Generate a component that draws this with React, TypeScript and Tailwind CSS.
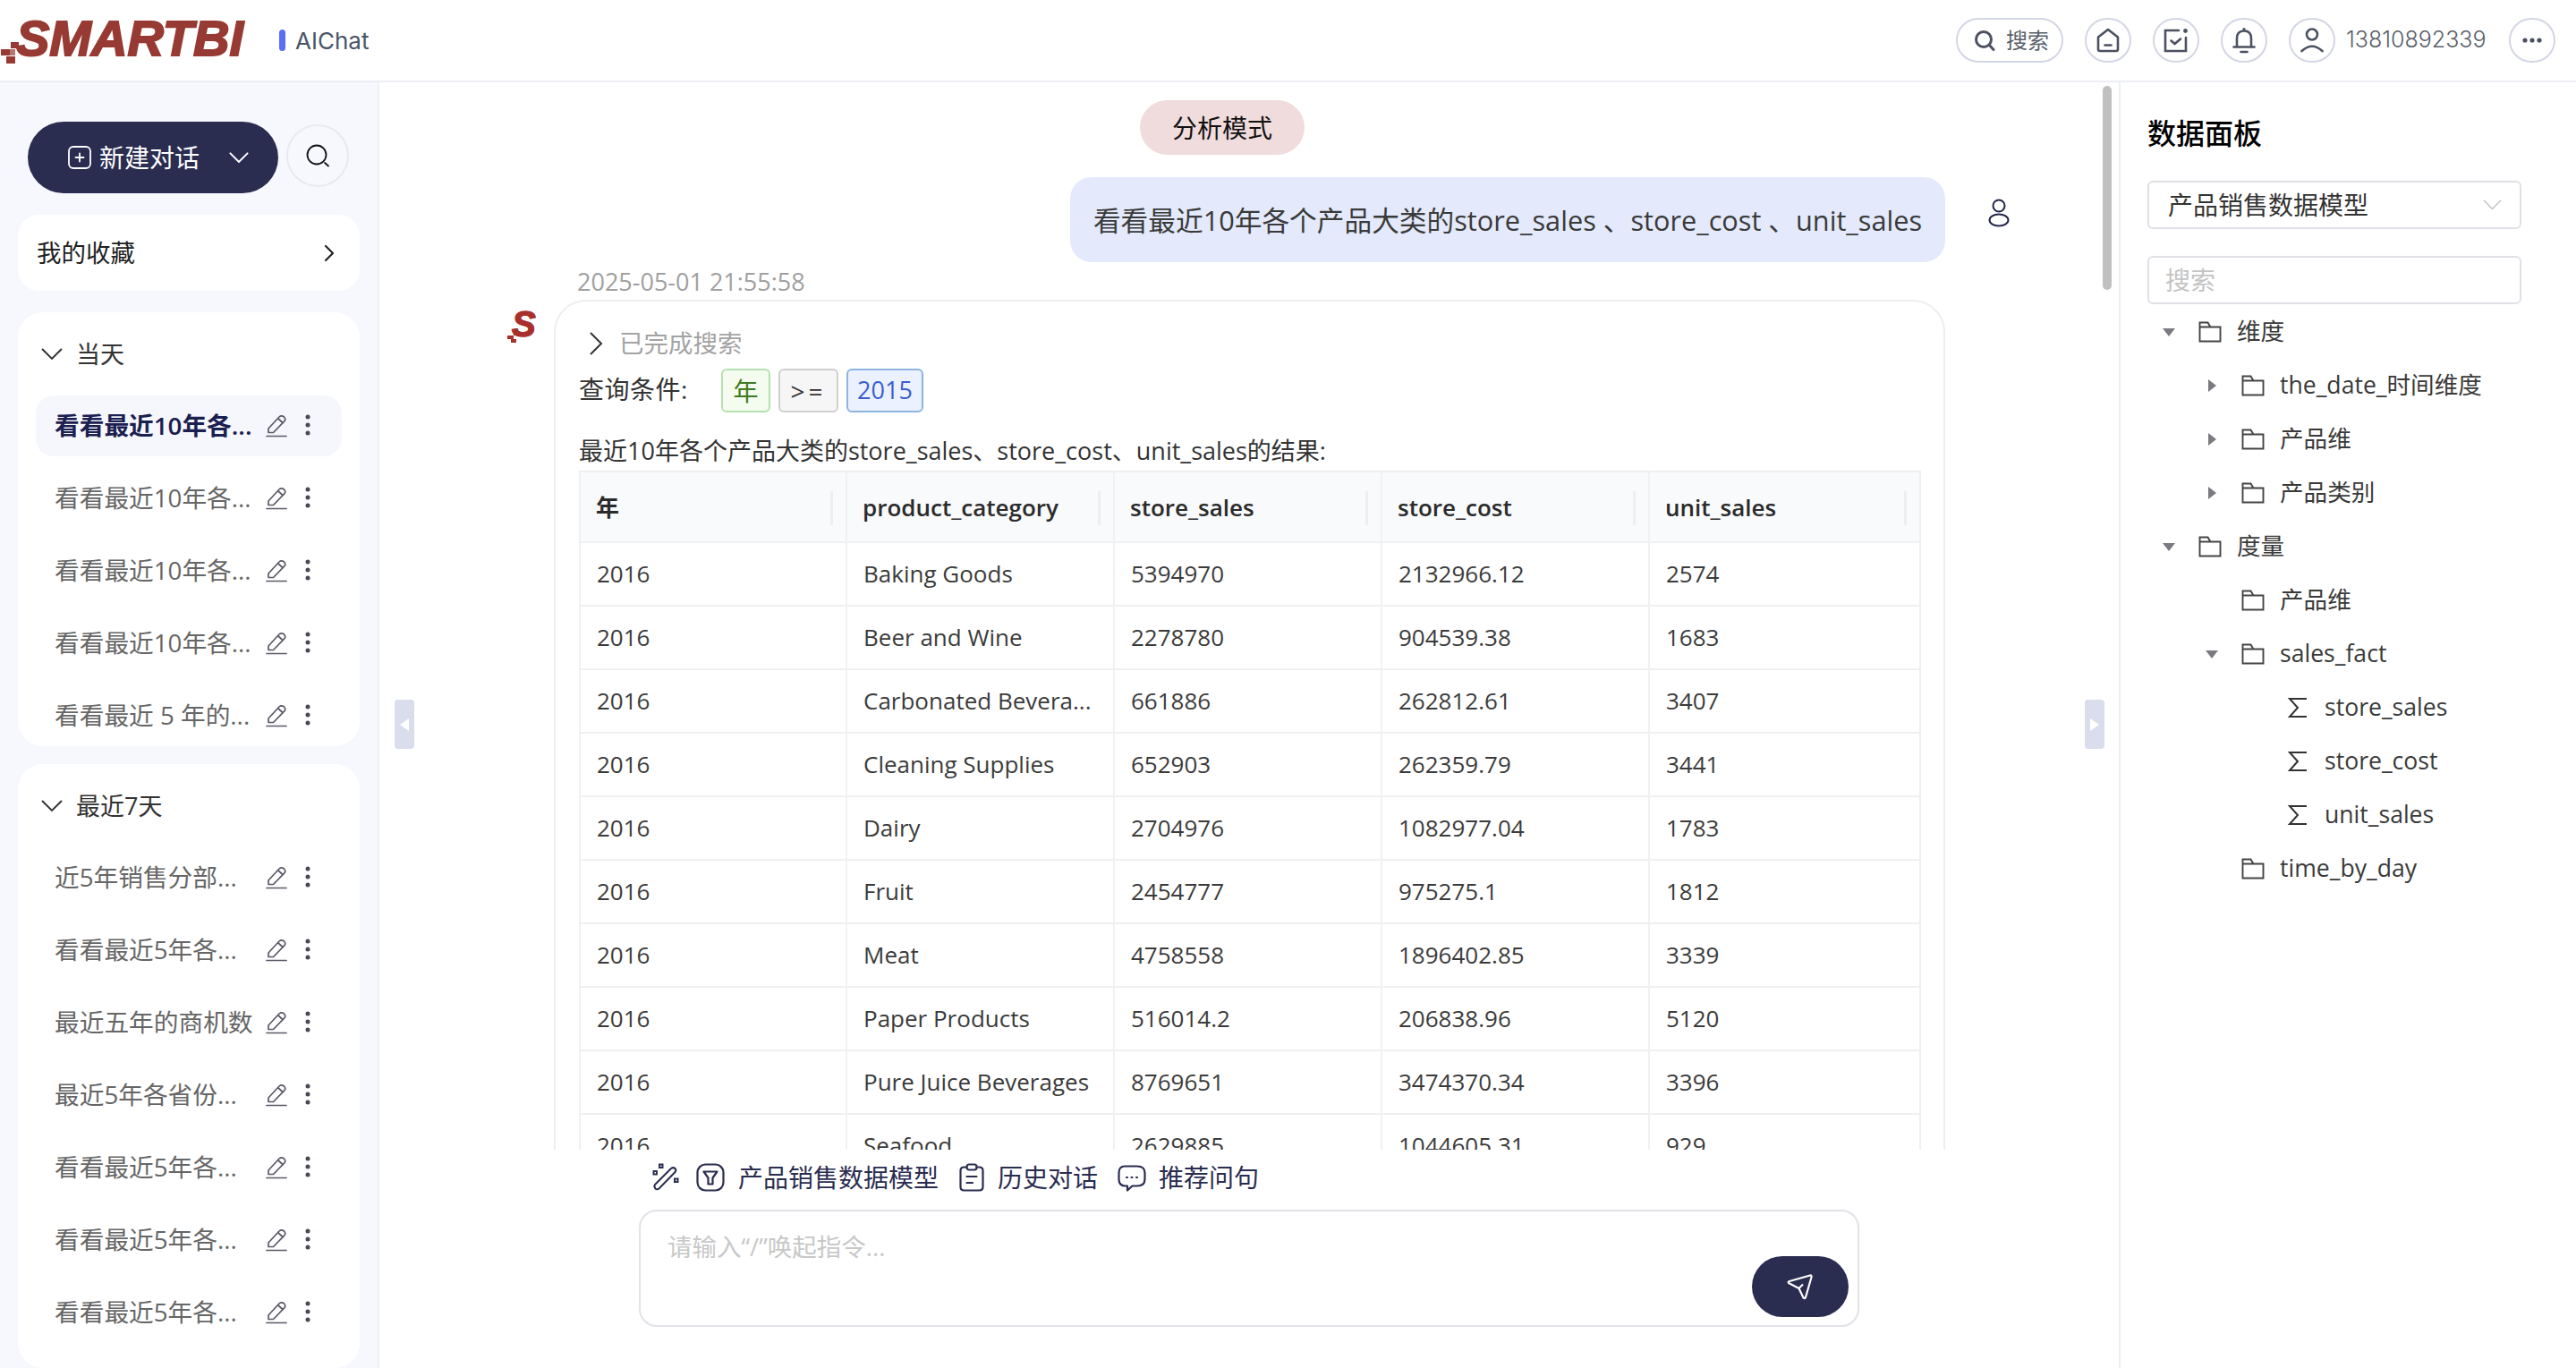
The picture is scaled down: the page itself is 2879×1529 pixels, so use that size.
import React from "react";
import { ChevronRight } from "lucide-react";

const today = ["看看最近10年各...", "看看最近10年各...", "看看最近10年各...", "看看最近10年各...", "看看最近 5 年的..."];
const week = ["近5年销售分部...", "看看最近5年各...", "最近五年的商机数", "最近5年各省份...", "看看最近5年各...", "看看最近5年各...", "看看最近5年各..."];

const rows = [
  ["2016", "Baking Goods", "5394970", "2132966.12", "2574"],
  ["2016", "Beer and Wine", "2278780", "904539.38", "1683"],
  ["2016", "Carbonated Bevera...", "661886", "262812.61", "3407"],
  ["2016", "Cleaning Supplies", "652903", "262359.79", "3441"],
  ["2016", "Dairy", "2704976", "1082977.04", "1783"],
  ["2016", "Fruit", "2454777", "975275.1", "1812"],
  ["2016", "Meat", "4758558", "1896402.85", "3339"],
  ["2016", "Paper Products", "516014.2", "206838.96", "5120"],
  ["2016", "Pure Juice Beverages", "8769651", "3474370.34", "3396"],
  ["2016", "Seafood", "2629885", "1044605.31", "929"],
];

const columns = ["年", "product_category", "store_sales", "store_cost", "unit_sales"];

const tree = [
  { level: 0, arrow: "down", kind: "folder", label: "维度" },
  { level: 1, arrow: "right", kind: "folder", label: "the_date_时间维度" },
  { level: 1, arrow: "right", kind: "folder", label: "产品维" },
  { level: 1, arrow: "right", kind: "folder", label: "产品类别" },
  { level: 0, arrow: "down", kind: "folder", label: "度量" },
  { level: 1, arrow: "", kind: "folder", label: "产品维" },
  { level: 1, arrow: "down", kind: "folder", label: "sales_fact" },
  { level: 2, arrow: "", kind: "sigma", label: "store_sales" },
  { level: 2, arrow: "", kind: "sigma", label: "store_cost" },
  { level: 2, arrow: "", kind: "sigma", label: "unit_sales" },
  { level: 1, arrow: "", kind: "folder", label: "time_by_day" },
];

const HeaderCircle = ({ children }: { children: React.ReactNode }) => (
  <div className="w-[52px] h-[50px] rounded-full border-2 border-[#d3d6e4] flex items-center justify-center shrink-0">{children}</div>
);

const Chevron = ({ w, color, sw }: { w: number; color: string; sw: number }) => (
  <svg width={w} height={w * 0.58} viewBox="0 0 24 14" fill="none" stroke={color} strokeWidth={sw} strokeLinecap="round" className="shrink-0">
    <path d="M1.5 1.5 L12 12 L22.5 1.5" />
  </svg>
);

const Pencil = () => (
  <svg width="24" height="27" viewBox="0 0 24 27" fill="none" stroke="#5a5a68" strokeWidth="1.7" className="shrink-0">
    <path d="M3 17 L15 4 Q17.5 1.6 20.5 4 Q23 6.8 20.5 9.2 L8.5 21.5 L3 21.5 Z" strokeLinejoin="round" />
    <path d="M13.5 5.5 L19.5 11" />
    <path d="M1 25.5 H23" strokeLinecap="round" />
  </svg>
);

const Dots = () => (
  <svg width="8" height="24" viewBox="0 0 8 24" fill="#4a4a55" className="shrink-0">
    <circle cx="4" cy="3" r="2.5" />
    <circle cx="4" cy="12" r="2.5" />
    <circle cx="4" cy="21" r="2.5" />
  </svg>
);

const ChatRow = ({ text, active }: { text: string; active?: boolean }) => (
  <div className={`h-[68px] shrink-0 rounded-[20px] flex items-center pl-[21px] pb-[2px] ${active ? "bg-[#f6f7fc]" : ""}`}>
    <span className={`w-[236px] whitespace-nowrap overflow-hidden text-[27.7px] leading-[40px] ${active ? "font-semibold text-[#1b2050]" : "text-[#666666]"}`}>{text}</span>
    <Pencil />
    <span className="ml-[19px] flex"><Dots /></span>
  </div>
);

const Group = ({ title, items, activeFirst, grow }: { title: string; items: string[]; activeFirst?: boolean; grow?: boolean }) => (
  <div className={`bg-white rounded-[28px] px-[20px] pt-[13px] flex flex-col overflow-hidden ${grow ? "flex-1 min-h-0" : "shrink-0"}`}>
    <div className="h-[68px] shrink-0 flex items-center gap-[15px] pl-[6px] text-[27px] text-[#333333] mb-[12px]">
      <Chevron w={24} color="#333333" sw={2} />
      {title}
    </div>
    <div className="flex flex-col gap-[13px]">
      {items.map((t, i) => (
        <ChatRow key={i} text={t} active={activeFirst && i === 0} />
      ))}
    </div>
  </div>
);

const Folder = () => (
  <svg width="26" height="24" viewBox="0 0 26 24" fill="none" stroke="#444" strokeWidth="1.9" className="shrink-0">
    <path d="M1.5 22.5 V1.5 H10.5 L13.5 6.5 H24.5 V22.5 Z M1.5 6.5 H13.5" />
  </svg>
);

const TreeArrow = ({ dir }: { dir: string }) => (
  <span className="w-[24px] flex justify-center shrink-0">
    {dir === "down" && (
      <svg width="14" height="9" viewBox="0 0 14 9" fill="#7a7b80"><path d="M0 0 H14 L7 9 Z" /></svg>
    )}
    {dir === "right" && (
      <svg width="9" height="14" viewBox="0 0 9 14" fill="#7a7b80"><path d="M0 0 L9 7 L0 14 Z" /></svg>
    )}
  </span>
);

const App = () => {
  return (
    <div className="w-[2879px] h-[1529px] overflow-hidden bg-white flex flex-col font-['Open_Sans','Noto_Sans_CJK_SC',sans-serif]">
      {/* top bar */}
      <header className="h-[92px] shrink-0 border-b-2 border-[#eceef4] flex items-center pl-[1px] pr-[23px]">
        <div className="relative w-[290px] h-[90px] shrink-0">
          <span className="absolute left-[17px] top-[11px] font-['Liberation_Sans'] font-bold italic text-[56px] leading-[64px] text-[#973a33] [-webkit-text-stroke:2px_#973a33] blur-[0.5px]">SMARTBI</span>
          <svg className="absolute left-0 top-[46px]" width="22" height="27" viewBox="0 0 22 27" fill="#973a33">
            <rect x="11" y="1" width="9" height="7" />
            <rect x="0" y="9" width="10" height="7" />
            <rect x="10" y="9" width="6" height="7" opacity="0.7" />
            <rect x="6" y="17" width="10" height="8" />
          </svg>
        </div>
        <span className="w-[7px] h-[24px] rounded-full bg-[#5b6ef5] ml-[21px]" />
        <span className="ml-[11px] font-['Inter'] text-[26px] text-[#4a5568]">AIChat</span>
        <div className="ml-auto flex items-center">
          <div className="w-[120px] h-[50px] rounded-full border-2 border-[#d3d6e4] flex items-center pl-[18px] gap-[12px] text-[24px] text-[#5a5f6a]">
            <svg width="24" height="24" viewBox="0 0 24 24" fill="none" stroke="#4b5160" strokeWidth="3" strokeLinecap="round">
              <circle cx="11" cy="11" r="8.5" />
              <path d="M17.5 17.5 L22 22.5" />
            </svg>
            搜索
          </div>
          <div className="ml-[24px]" />
          <HeaderCircle>
            <svg width="26" height="28" viewBox="0 0 26 28" fill="none" stroke="#4b5160" strokeWidth="2.6" strokeLinejoin="round" strokeLinecap="round">
              <path d="M2 10.5 L13 2 L24 10.5 V24 Q24 26 22 26 H4 Q2 26 2 24 Z" />
              <path d="M9.5 19.5 H16.5" />
            </svg>
          </HeaderCircle>
          <div className="ml-[24px]" />
          <HeaderCircle>
            <svg width="28" height="28" viewBox="0 0 28 28" fill="none" stroke="#4b5160" strokeWidth="2.6" strokeLinecap="round">
              <path d="M17 3 H2 V26 H25 V11" />
              <path d="M8.5 14.5 L12.5 18 L19 12.5" />
              <circle cx="24.5" cy="3.5" r="2.4" fill="#4b5160" stroke="none" />
            </svg>
          </HeaderCircle>
          <div className="ml-[24px]" />
          <HeaderCircle>
            <svg width="26" height="30" viewBox="0 0 26 30" fill="none" stroke="#4b5160" strokeWidth="2.6" strokeLinecap="round">
              <path d="M5 22 V13 Q5 4.5 13 4.5 Q21 4.5 21 13 V22" />
              <path d="M1.5 22.5 H24.5" />
              <path d="M9.5 28 H16.5" />
              <circle cx="13" cy="2.5" r="1.6" fill="#4b5160" stroke="none" />
            </svg>
          </HeaderCircle>
          <div className="ml-[24px]" />
          <HeaderCircle>
            <svg width="26" height="28" viewBox="0 0 26 28" fill="none" stroke="#4b5160" strokeWidth="2.6" strokeLinecap="round">
              <circle cx="13" cy="7.5" r="6" />
              <path d="M1.5 26 Q13 15.5 24.5 26" />
            </svg>
          </HeaderCircle>
          <span className="ml-[12px] w-[182px] text-[25px] text-[#5a5f6a] font-['Inter'] font-light">13810892339</span>
          <HeaderCircle>
            <svg width="22" height="6" viewBox="0 0 22 6" fill="#4b5160">
              <circle cx="3" cy="3" r="2.6" />
              <circle cx="11" cy="3" r="2.6" />
              <circle cx="19" cy="3" r="2.6" />
            </svg>
          </HeaderCircle>
        </div>
      </header>

      <div className="flex-1 min-h-0 flex">
        {/* left sidebar */}
        <aside className="w-[424px] shrink-0 bg-[#f7f8fd] border-r-2 border-[#eef0f6] flex flex-col pt-[44px] px-[20px]">
          <div className="flex items-center h-[80px] shrink-0">
            <div className="ml-[11px] w-[280px] h-[80px] rounded-full bg-[#2a2c50] flex items-center pl-[45px] text-white text-[28px]">
              <svg width="26" height="26" viewBox="0 0 26 26" fill="none" stroke="white" strokeWidth="1.8" strokeLinecap="round">
                <rect x="1" y="1" width="24" height="24" rx="5" />
                <path d="M13 8.5 V17.5 M8.5 13 H17.5" />
              </svg>
              <span className="ml-[9px]">新建对话</span>
              <span className="ml-[33px] flex"><Chevron w={22} color="white" sw={2.2} /></span>
            </div>
            <div className="ml-[9px] -mt-[4px] w-[70px] h-[70px] rounded-full border-2 border-[#e9e9ee] flex items-center justify-center">
              <svg width="26" height="26" viewBox="0 0 26 26" fill="none" stroke="#111" strokeWidth="1.8" strokeLinecap="round">
                <circle cx="12" cy="12" r="10.5" />
                <path d="M21 21 L25 24.5" />
              </svg>
            </div>
          </div>
          <div className="mt-[24px] h-[85px] shrink-0 bg-white rounded-[24px] flex items-center justify-between pl-[21px] pr-[18px] text-[27.5px] text-[#222222]">
            我的收藏
            <ChevronRight size={32} strokeWidth={1.6} />
          </div>
          <div className="mt-[24px]">
            <Group title="当天" items={today} activeFirst />
          </div>
          <div className="mt-[20px] flex-1 min-h-0 flex flex-col">
            <Group title="最近7天" items={week} grow />
          </div>
        </aside>

        {/* chat column */}
        <main className="relative flex-1 min-w-0 flex flex-col">
          <div className="h-[1193px] shrink-0 overflow-hidden">
            <div className="mt-[20px] ml-[850px] w-[184px] h-[61px] rounded-full bg-[#f0dcdc] flex items-center justify-center text-[28px] text-[#111111]">分析模式</div>
            <div className="mt-[25px] flex justify-end items-center gap-[48px] pr-[122px]">
              <div className="h-[95px] w-[978px] pt-[2px] rounded-[24px] bg-[#e4eafc] flex items-center justify-center text-[30.7px] text-[#3a3a3a] whitespace-nowrap">
                看看最近10年各个产品大类的store_sales 、store_cost 、unit_sales
              </div>
              <svg width="24" height="32" viewBox="0 0 24 32" fill="none" stroke="#22244a" strokeWidth="2" className="mb-[16px]">
                <circle cx="12" cy="8" r="6.5" />
                <ellipse cx="12" cy="24" rx="10.5" ry="6.5" />
              </svg>
            </div>
            <div className="mt-[2px] pl-[221px] h-[40px] leading-[40px] text-[27px] text-[#a0a0a0]">2025-05-01 21:55:58</div>
            <div className="flex pl-[142px] items-start gap-[16px]">
              <svg width="37" height="38" viewBox="0 0 37 38" className="mt-[10px] shrink-0" fill="#a82f2b" stroke="#a82f2b">
                <text x="6" y="31" fontFamily="Liberation Sans" fontWeight="700" fontStyle="italic" fontSize="40" strokeWidth="1.4">S</text>
                <rect x="8" y="25" width="6" height="5" strokeWidth="0" />
                <rect x="1" y="30" width="7" height="4" strokeWidth="0" />
                <rect x="5" y="34" width="6" height="4" strokeWidth="0" />
              </svg>
              <div className="w-[1555px] rounded-[36px] border-2 border-[#eeeef2] pt-[27px] pl-[26px] pr-[26px] pb-[40px]">
                <div className="h-[40px] flex items-center text-[27.5px] text-[#a3a3a3]">
                  <svg width="16" height="26" viewBox="0 0 16 26" fill="none" stroke="#333" strokeWidth="2" className="ml-[11px] mr-[18px]">
                    <path d="M2 1 L14 13 L2 25" />
                  </svg>
                  已完成搜索
                </div>
                <div className="mt-[8px] h-[49px] flex items-center text-[28px] text-[#333333]">
                  <span className="w-[159px] pb-[3px] tracking-[0.5px]">查询条件:</span>
                  <span className="w-[55px] h-[49px] rounded-[6px] border-2 border-[#b7e0b0] bg-[#f3fcee] text-[#3f7a1e] flex items-center justify-center">年</span>
                  <span className="ml-[9px] w-[67px] h-[49px] rounded-[6px] border-2 border-[#d0d0d0] bg-[#f6f6f6] text-[#333333] flex items-center justify-center tracking-[4px]">&gt;=</span>
                  <span className="ml-[9px] w-[86px] h-[49px] rounded-[6px] border-2 border-[#8fb4e0] bg-[#ebf1fe] text-[#3b5fcf] text-[27px] flex items-center justify-center">2015</span>
                </div>
                <div className="mt-[23px] h-[40px] leading-[40px] text-[27px] text-[#333333] whitespace-nowrap">最近10年各个产品大类的store_sales、store_cost、unit_sales的结果:</div>
                <table className="mt-[2px] w-[1500px] table-fixed border-collapse border-2 border-[#f0f0f3] text-[26px]">
                  <thead>
                    <tr className="h-[79px] bg-[#f9fafc] border-b-2 border-[#f0f0f3]">
                      {columns.map((c, i) => (
                        <th key={c} className={`relative text-left font-semibold text-[#2b2b2b] pl-[17px] pt-[2px] border-r-2 border-[#f1f1f4] last:border-r-0 ${i === 0 ? "w-[298px]" : i < 4 ? "w-[299px]" : ""}`}>
                          {c}
                          <span className="absolute right-[14px] top-[21px] w-[3px] h-[38px] bg-[#eeeeef]" />
                        </th>
                      ))}
                    </tr>
                  </thead>
                  <tbody>
                    {rows.map((r, i) => (
                      <tr key={i} className="h-[71px] border-b-2 border-[#f0f0f3]">
                        {r.map((v, j) => (
                          <td key={j} className="pl-[18px] pb-[1px] text-[#3b3b3b] border-r-2 border-[#f1f1f4] last:border-r-0 whitespace-nowrap">{v}</td>
                        ))}
                      </tr>
                    ))}
                  </tbody>
                </table>
              </div>
            </div>
          </div>

          {/* input area */}
          <div className="pl-[290px] flex-1 min-h-0">
            <div className="h-[67px] pb-[6px] flex items-center text-[28px] text-[#2a2c50]">
              <svg width="32" height="32" viewBox="0 0 32 32" fill="none" stroke="#2a2c50" strokeWidth="2" className="ml-[15px]">
                <rect x="8" y="1.5" width="3.5" height="3.5" />
                <rect x="1.5" y="9" width="3.5" height="3.5" />
                <rect x="25" y="17.5" width="3.5" height="3.5" />
                <path d="M3 24 L21 6 Q23.5 4.2 25.5 6 Q27.2 8 25.5 10 L7.5 28.5 Q5.2 30 3.4 28.4 Q1.6 26 3 24 Z" />
              </svg>
              <svg width="32" height="32" viewBox="0 0 32 32" fill="none" stroke="#2a2c50" strokeWidth="2.2" strokeLinejoin="round" className="ml-[17px]">
                <rect x="1.5" y="1.5" width="29" height="29" rx="9" />
                <path d="M8.5 9.5 H23.5 L18.5 16.5 V23.5 H13.5 V16.5 Z" />
              </svg>
              <span className="ml-[15px]">产品销售数据模型</span>
              <svg width="28" height="32" viewBox="0 0 28 32" fill="none" stroke="#2a2c50" strokeWidth="2.2" strokeLinecap="round" className="ml-[23px]">
                <path d="M8.5 4.5 H5.5 Q1.5 4.5 1.5 8.5 V26.5 Q1.5 30.5 5.5 30.5 H22.5 Q26.5 30.5 26.5 26.5 V8.5 Q26.5 4.5 22.5 4.5 H19.5" />
                <rect x="8.5" y="1.5" width="11" height="6" rx="2.5" />
                <path d="M8.5 15 H19.5 M8.5 22 H15" />
              </svg>
              <span className="ml-[15px]">历史对话</span>
              <svg width="32" height="32" viewBox="0 0 32 32" fill="none" stroke="#2a2c50" strokeWidth="2.2" strokeLinejoin="round" className="ml-[22px]">
                <path d="M8 3.5 H22 Q30.5 3.5 30.5 11 V18 Q30.5 25.5 22 25.5 H16.5 L11 30.5 V25.5 H9 Q1.5 25.5 1.5 18 V11 Q1.5 3.5 8 3.5 Z" />
                <path d="M10 16 H11 M15.5 16 H16.5 M21 16 H22" strokeLinecap="round" />
              </svg>
              <span className="ml-[14px]">推荐问句</span>
            </div>
            <div className="relative w-[1364px] h-[131px] rounded-[20px] border-2 border-[#e2e2e8] pl-[30px] pt-[20px] text-[27.5px] leading-[40px] text-[#c8c8c8]">
              请输入“/”唤起指令...
              <div className="absolute right-[10px] bottom-[9px] w-[108px] h-[68px] rounded-full bg-[#2a2c50] flex items-center justify-center">
                <svg width="30" height="30" viewBox="0 0 30 30" fill="none" stroke="white" strokeWidth="2.2" strokeLinejoin="round">
                  <path d="M2 11 Q1 9.5 3 9 L26 2.5 Q28 2.2 27.5 4.5 L21 27 Q20 29 18.5 27.5 L13.5 17 Z" />
                  <path d="M13.5 17 L18 12.5" />
                </svg>
              </div>
            </div>
          </div>

          {/* scrollbar and the two side handles */}
          <div className="absolute left-[1926px] top-[4px] w-[10px] h-[228px] rounded-full bg-[#c0c0c0]" />
          <div className="absolute left-[17px] top-[690px] w-[22px] h-[55px] rounded-[4px] bg-[#d9ddec] flex items-center justify-center">
            <svg width="10" height="14" viewBox="0 0 10 14" fill="white"><path d="M10 0 V14 L0 7 Z" /></svg>
          </div>
          <div className="absolute left-[1906px] top-[690px] w-[22px] h-[55px] rounded-[4px] bg-[#d9ddec] flex items-center justify-center">
            <svg width="10" height="14" viewBox="0 0 10 14" fill="white"><path d="M0 0 V14 L10 7 Z" /></svg>
          </div>
        </main>

        {/* data panel */}
        <aside className="w-[511px] shrink-0 border-l-2 border-[#eceef4] pl-[30px] pt-[36px]">
          <h2 className="h-[42px] leading-[42px] text-[32px] font-medium text-black">数据面板</h2>
          <div className="mt-[32px] w-[418px] h-[54px] rounded-[6px] border-2 border-[#e0e0e6] flex items-center justify-between pl-[21px] pr-[20px] text-[28px] text-[#333333]">
            产品销售数据模型
            <Chevron w={21} color="#c4c4c8" sw={1.8} />
          </div>
          <div className="mt-[30px] w-[418px] h-[54px] rounded-[6px] border-2 border-[#e0e0e6] flex items-center pl-[18px] text-[28px] text-[#c4c4c4]">搜索</div>
          <div className="mt-[1px]">
            {tree.map((n, i) => (
              <div key={i} className={`h-[60px] flex items-center text-[26.6px] text-[#3a3a3a] ${n.level === 0 ? "pl-[12px]" : n.level === 1 ? "pl-[60px]" : "pl-[110px]"}`}>
                <TreeArrow dir={n.arrow} />
                <span className="ml-[21px] flex">
                  {n.kind === "folder" ? (
                    <Folder />
                  ) : (
                    <svg width="26" height="24" viewBox="0 0 26 24" fill="none" stroke="#333" strokeWidth="2">
                      <path d="M22 3 V2 H4 L13 12 L4 22 H22 V21" />
                    </svg>
                  )}
                </span>
                <span className="ml-[17px] whitespace-nowrap">{n.label}</span>
              </div>
            ))}
          </div>
        </aside>
      </div>
    </div>
  );
};

export default App;
